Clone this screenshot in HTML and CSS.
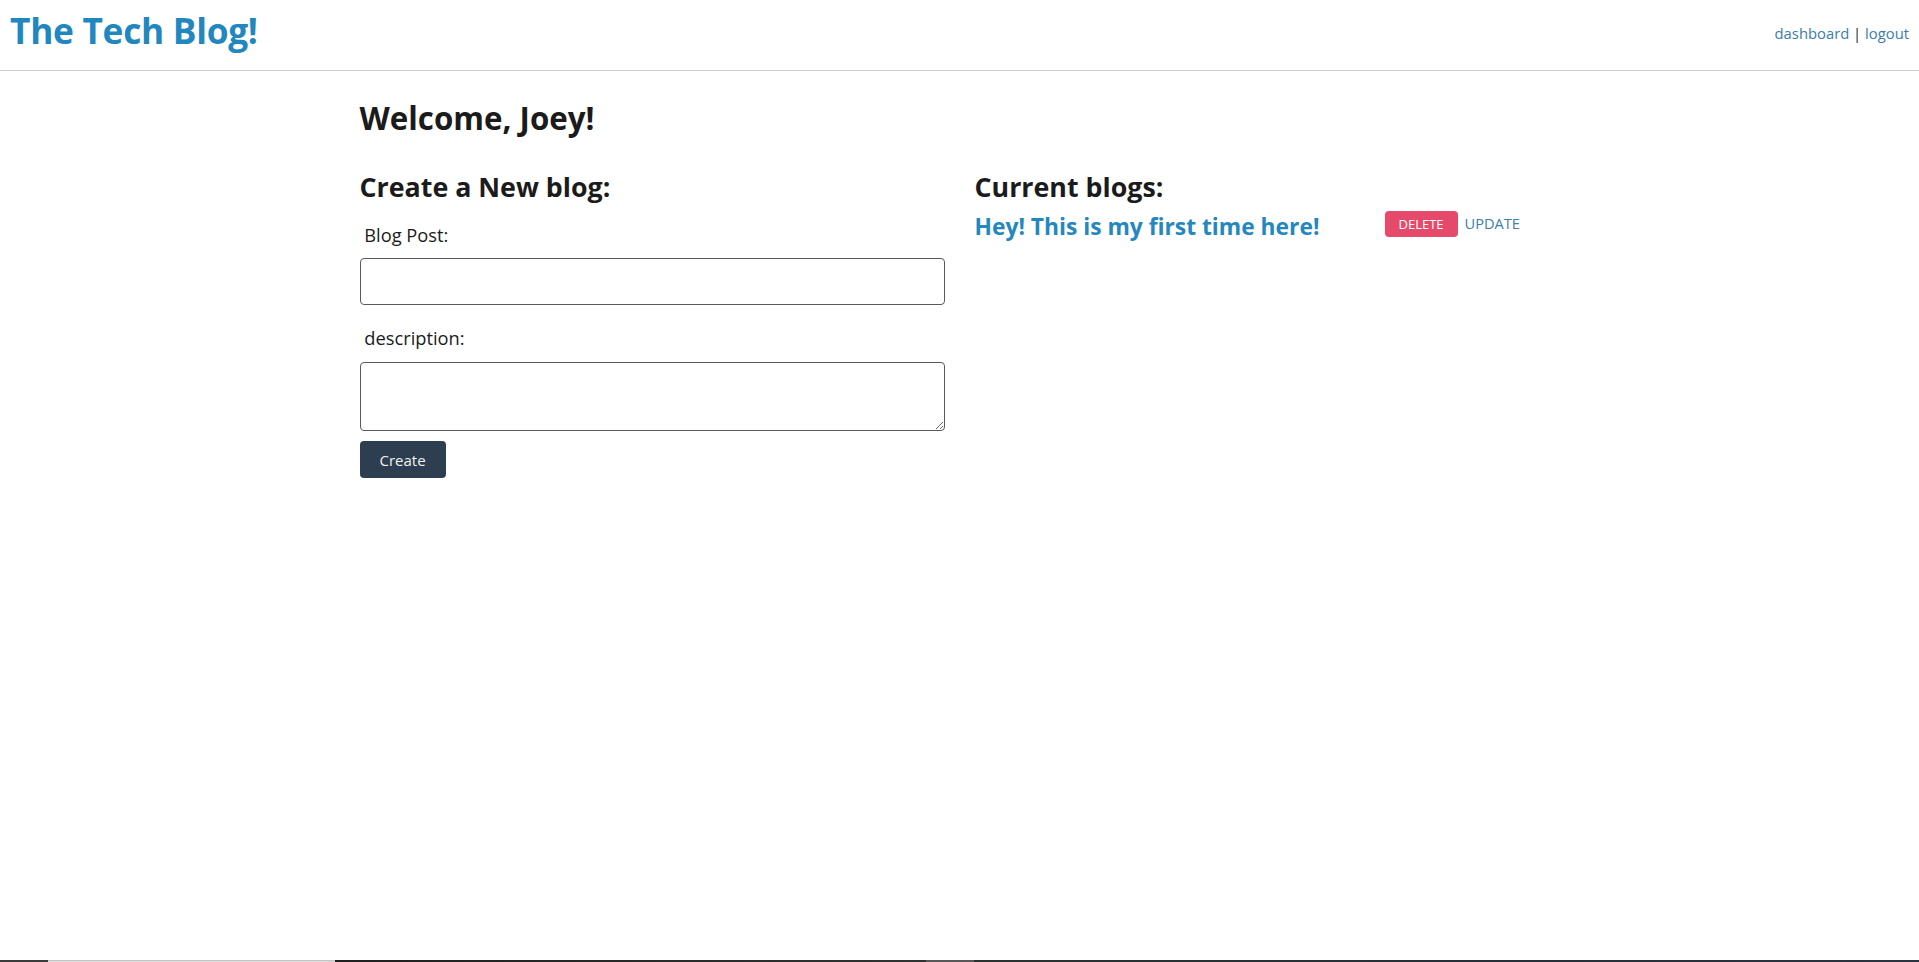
FILE: index.html
```html
<!DOCTYPE html>
<html lang="en">
<head>
<meta charset="utf-8">
<title>The Tech Blog!</title>
<link rel="stylesheet" href="styles.css">
</head>
<body>
<div class="page">
  <header class="topbar">
    <h1 class="brand">The Tech Blog!</h1>
    <nav class="nav"><a href="#" class="nav-link">dashboard</a> | <a href="#" class="nav-link">logout</a></nav>
  </header>
  <main class="container">
    <h2 class="welcome">Welcome, Joey!</h2>
    <div class="columns">
      <section class="col">
        <h3 class="section-title">Create a New blog:</h3>
        <form class="blog-form">
          <label class="field-label" for="post">&nbsp;Blog Post:</label>
          <input class="field-input" id="post" type="text">
          <label class="field-label spaced" for="desc">&nbsp;description:</label>
          <textarea class="field-area" id="desc"></textarea>
          <button type="button" class="btn-create">Create</button>
        </form>
      </section>
      <section class="col">
        <h3 class="section-title">Current blogs:</h3>
        <div class="blog-row">
          <a href="#" class="blog-title">Hey! This is my first time here!</a>
          <button type="button" class="btn-delete">DELETE</button>
          <a href="#" class="btn-update">UPDATE</a>
        </div>
      </section>
    </div>
  </main>
  <div class="taskbar">
    <span class="tb-a"></span><span class="tb-b"></span><span class="tb-c"></span><span class="tb-d"></span><span class="tb-e"></span>
  </div>
</div>
</body>
</html>
```

FILE: styles.css
```css
* { box-sizing: border-box; }
html, body { margin: 0; padding: 0; }
body {
  font-family: "Open Sans", "Noto Sans", sans-serif;
  color: #1b1b1b;
  background: #fff;
}
.page {
  min-height: 100vh;
  display: flex;
  flex-direction: column;
}
.topbar {
  height: 71px;
  border-bottom: 1px solid #cfcfcf;
  display: flex;
  justify-content: space-between;
  align-items: center;
  padding: 0 10px 6px 10px;
}
.brand {
  margin: 0 0 3px;
  font-size: 35.3px;
  line-height: 1;
  font-weight: 700;
  color: #2387bf;
  letter-spacing: -0.3px;
}
.nav {
  font-size: 14.8px;
  color: #1b1b1b;
  padding-top: 2px;
}
.nav-link {
  color: #3a7daa;
  text-decoration: none;
}
.container {
  flex: 1;
  width: 1200px;
  margin: 0 auto;
}
.welcome {
  margin: 29px 0 0;
  font-size: 31.3px;
  line-height: 1.2;
  font-weight: 700;
}
.columns {
  display: flex;
  gap: 30px;
  margin-top: 33px;
}
.col {
  flex: 1;
}
.section-title {
  margin: 0;
  font-size: 26.8px;
  line-height: 1.2;
  font-weight: 700;
}
.blog-form {
  display: flex;
  flex-direction: column;
  align-items: flex-start;
}
.field-label {
  font-size: 18.3px;
  line-height: 27px;
  margin: 18px 0 10.5px;
}
.field-label.spaced {
  margin-top: 19px;
  margin-bottom: 11px;
}
.field-input,
.field-area {
  width: 100%;
  border: 1px solid #5a5a5a;
  border-radius: 4px;
  font: inherit;
  background: #fff;
}
.field-input { height: 47px; }
.field-area { height: 69px; resize: vertical; display: block; }
.btn-create {
  margin-top: 10px;
  height: 37px;
  padding: 0 20px;
  background: #2c3e50;
  color: #f1f1f1;
  border: none;
  border-radius: 4px;
  font-family: inherit;
  font-size: 15px;
}
.blog-row {
  display: flex;
  align-items: flex-start;
  margin-top: 8px;
}
.blog-title {
  width: 410px;
  font-size: 22.8px;
  font-weight: 700;
  color: #2487bd;
  text-decoration: none;
}
.btn-delete {
  margin-top: 0;
  height: 26px;
  padding: 0 14px;
  background: #e54a6a;
  color: #fff;
  border: none;
  border-radius: 4px;
  font-family: inherit;
  font-size: 13px;
}
.btn-update {
  margin-left: 7px;
  margin-top: 2px;
  font-size: 14.6px;
  color: #3b80ab;
  text-decoration: none;
}
.taskbar {
  height: 2px;
  display: flex;
}
.tb-a { width: 48px; background: #3b3b3b; }
.tb-b { width: 287px; background: #dcdcdc; border-top: 1px solid #c4c4c4; }
.tb-c { width: 591px; background: linear-gradient(90deg, #1f1f1f, #2f3433); }
.tb-d { width: 48px; background: #585858; }
.tb-e { flex: 1; background: linear-gradient(90deg, #2a3230, #26303a 60%, #2b3340); }
```
